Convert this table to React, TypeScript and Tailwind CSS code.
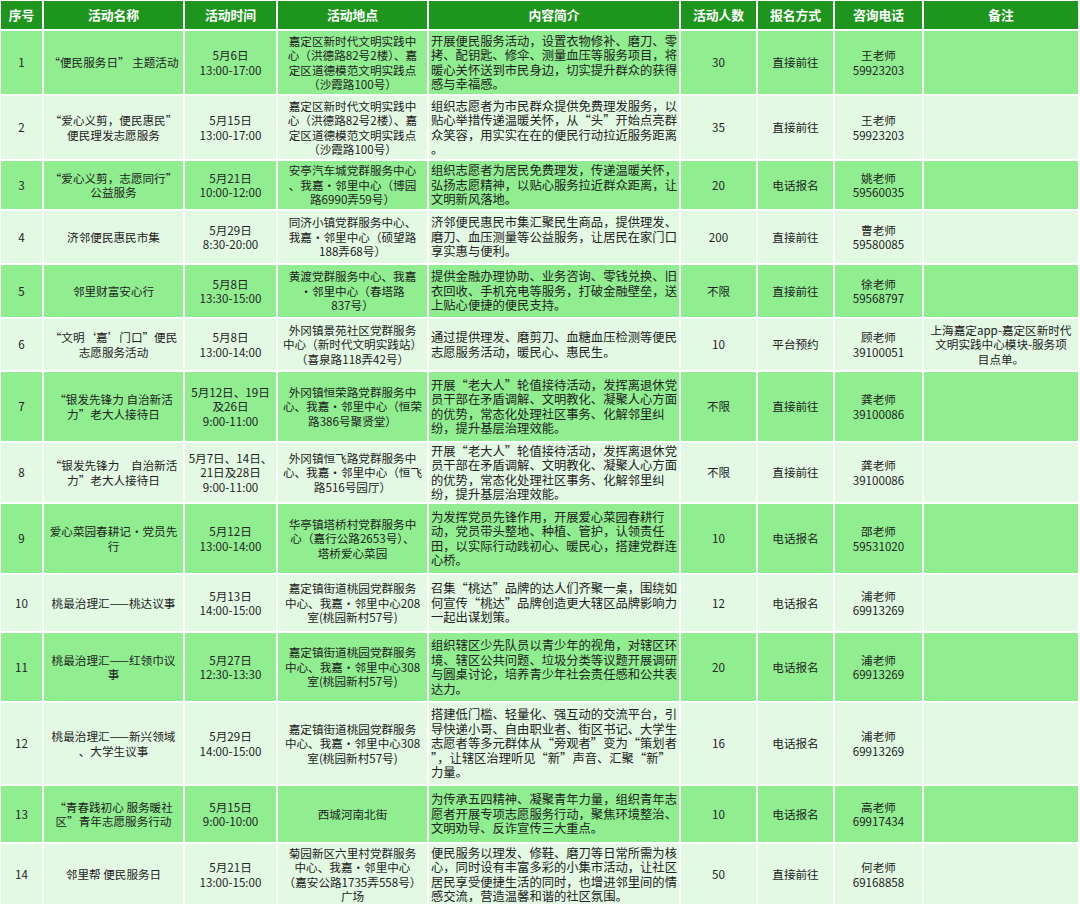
type Row = {
  no: string
  name: string[]
  time: string[]
  place: string[]
  desc: string[]
  count: string
  signup: string
  contact: string[]
  note: string[]
}

const placeJd = ["嘉定区新时代文明实践中", "心（洪德路82号2楼）、嘉", "定区道德模范文明实践点", "（沙霞路100号）"]

const laoDaRen = [
  "开展“老大人”轮值接待活动，发挥离退休党",
  "员干部在矛盾调解、文明教化、凝聚人心方面",
  "的优势，常态化处理社区事务、化解邻里纠",
  "纷，提升基层治理效能。",
]

const rows: Row[] = [
  {
    no: "1",
    name: ["“便民服务日” 主题活动"],
    time: ["5月6日", "13:00-17:00"],
    place: placeJd,
    desc: [
      "开展便民服务活动，设置衣物修补、磨刀、零",
      "拷、配钥匙、修伞、测量血压等服务项目，将",
      "暖心关怀送到市民身边，切实提升群众的获得",
      "感与幸福感。",
    ],
    count: "30",
    signup: "直接前往",
    contact: ["王老师", "59923203"],
    note: [],
  },
  {
    no: "2",
    name: ["“爱心义剪，便民惠民”", "便民理发志愿服务"],
    time: ["5月15日", "13:00-17:00"],
    place: placeJd,
    desc: [
      "组织志愿者为市民群众提供免费理发服务，以",
      "贴心举措传递温暖关怀，从“头”开始点亮群",
      "众笑容，用实实在在的便民行动拉近服务距离",
      "。",
    ],
    count: "35",
    signup: "直接前往",
    contact: ["王老师", "59923203"],
    note: [],
  },
  {
    no: "3",
    name: ["“爱心义剪，志愿同行”", "公益服务"],
    time: ["5月21日", "10:00-12:00"],
    place: ["安亭汽车城党群服务中心", "、我嘉·邻里中心（博园", "路6990弄59号）"],
    desc: [
      "组织志愿者为居民免费理发，传递温暖关怀，",
      "弘扬志愿精神，以贴心服务拉近群众距离，让",
      "文明新风落地。",
    ],
    count: "20",
    signup: "电话报名",
    contact: ["姚老师", "59560035"],
    note: [],
  },
  {
    no: "4",
    name: ["济邻便民惠民市集"],
    time: ["5月29日", "8:30-20:00"],
    place: ["同济小镇党群服务中心、", "我嘉·邻里中心（硕望路", "188弄68号）"],
    desc: [
      "济邻便民惠民市集汇聚民生商品，提供理发、",
      "磨刀、血压测量等公益服务，让居民在家门口",
      "享实惠与便利。",
    ],
    count: "200",
    signup: "直接前往",
    contact: ["曹老师", "59580085"],
    note: [],
  },
  {
    no: "5",
    name: ["邻里财富安心行"],
    time: ["5月8日", "13:30-15:00"],
    place: ["黄渡党群服务中心、我嘉", "·邻里中心（春塔路", "837号）"],
    desc: [
      "提供金融办理协助、业务咨询、零钱兑换、旧",
      "衣回收、手机充电等服务，打破金融壁垒，送",
      "上贴心便捷的便民支持。",
    ],
    count: "不限",
    signup: "直接前往",
    contact: ["徐老师", "59568797"],
    note: [],
  },
  {
    no: "6",
    name: ["“文明‘嘉’门口”便民", "志愿服务活动"],
    time: ["5月8日", "13:00-14:00"],
    place: ["外冈镇景苑社区党群服务", "中心（新时代文明实践站）", "（喜泉路118弄42号）"],
    desc: ["通过提供理发、磨剪刀、血糖血压检测等便民", "志愿服务活动，暖民心、惠民生。"],
    count: "10",
    signup: "平台预约",
    contact: ["顾老师", "39100051"],
    note: ["上海嘉定app-嘉定区新时代", "文明实践中心模块-服务项", "目点单。"],
  },
  {
    no: "7",
    name: ["“银发先锋力 自治新活", "力”老大人接待日"],
    time: ["5月12日、19日", "及26日", "9:00-11:00"],
    place: ["外冈镇恒荣路党群服务中", "心、我嘉•邻里中心（恒荣", "路386号聚贤堂）"],
    desc: laoDaRen,
    count: "不限",
    signup: "直接前往",
    contact: ["龚老师", "39100086"],
    note: [],
  },
  {
    no: "8",
    name: ["“银发先锋力　自治新活", "力”老大人接待日"],
    time: ["5月7日、14日、", "21日及28日", "9:00-11:00"],
    place: ["外冈镇恒飞路党群服务中", "心、我嘉•邻里中心（恒飞", "路516号园厅）"],
    desc: laoDaRen,
    count: "不限",
    signup: "直接前往",
    contact: ["龚老师", "39100086"],
    note: [],
  },
  {
    no: "9",
    name: ["爱心菜园春耕记·党员先", "行"],
    time: ["5月12日", "13:00-14:00"],
    place: ["华亭镇塔桥村党群服务中", "心（嘉行公路2653号）、", "塔桥爱心菜园"],
    desc: [
      "为发挥党员先锋作用，开展爱心菜园春耕行",
      "动，党员带头整地、种植、管护，认领责任",
      "田，以实际行动践初心、暖民心，搭建党群连",
      "心桥。",
    ],
    count: "10",
    signup: "电话报名",
    contact: ["邵老师", "59531020"],
    note: [],
  },
  {
    no: "10",
    name: ["桃最治理汇——桃达议事"],
    time: ["5月13日", "14:00-15:00"],
    place: ["嘉定镇街道桃园党群服务", "中心、我嘉·邻里中心208", "室(桃园新村57号)"],
    desc: [
      "召集“桃达”品牌的达人们齐聚一桌，围绕如",
      "何宣传“桃达”品牌创造更大辖区品牌影响力",
      "一起出谋划策。",
    ],
    count: "12",
    signup: "电话报名",
    contact: ["浦老师", "69913269"],
    note: [],
  },
  {
    no: "11",
    name: ["桃最治理汇——红领巾议", "事"],
    time: ["5月27日", "12:30-13:30"],
    place: ["嘉定镇街道桃园党群服务", "中心、我嘉·邻里中心308", "室(桃园新村57号)"],
    desc: [
      "组织辖区少先队员以青少年的视角，对辖区环",
      "境、辖区公共问题、垃圾分类等议题开展调研",
      "与圆桌讨论，培养青少年社会责任感和公共表",
      "达力。",
    ],
    count: "20",
    signup: "电话报名",
    contact: ["浦老师", "69913269"],
    note: [],
  },
  {
    no: "12",
    name: ["桃最治理汇——新兴领域", "、大学生议事"],
    time: ["5月29日", "14:00-15:00"],
    place: ["嘉定镇街道桃园党群服务", "中心、我嘉·邻里中心308", "室(桃园新村57号)"],
    desc: [
      "搭建低门槛、轻量化、强互动的交流平台，引",
      "导快递小哥、自由职业者、街区书记、大学生",
      "志愿者等多元群体从“旁观者”变为“策划者",
      "”，让辖区治理听见“新”声音、汇聚“新”",
      "力量。",
    ],
    count: "16",
    signup: "电话报名",
    contact: ["浦老师", "69913269"],
    note: [],
  },
  {
    no: "13",
    name: ["“青春践初心 服务暖社", "区”青年志愿服务行动"],
    time: ["5月15日", "9:00-10:00"],
    place: ["西城河南北街"],
    desc: [
      "为传承五四精神、凝聚青年力量，组织青年志",
      "愿者开展专项志愿服务行动，聚焦环境整治、",
      "文明劝导、反诈宣传三大重点。",
    ],
    count: "10",
    signup: "电话报名",
    contact: ["高老师", "69917434"],
    note: [],
  },
  {
    no: "14",
    name: ["邻里帮 便民服务日"],
    time: ["5月21日", "13:00-15:00"],
    place: ["菊园新区六里村党群服务", "中心、我嘉·邻里中心", "（嘉安公路1735弄558号）", "广场"],
    desc: [
      "便民服务以理发、修鞋、磨刀等日常所需为核",
      "心，同时设有丰富多彩的小集市活动，让社区",
      "居民享受便捷生活的同时，也增进邻里间的情",
      "感交流，营造温馨和谐的社区氛围。",
    ],
    count: "50",
    signup: "直接前往",
    contact: ["何老师", "69168858"],
    note: [],
  },
]

const headers = ["序号", "活动名称", "活动时间", "活动地点", "内容简介", "活动人数", "报名方式", "咨询电话", "备注"]

// desc column is a touch larger and left aligned, the rest centred
function Cell({ lines, bg, left }: { lines: string[]; bg: string; left?: boolean }) {
  return (
    <div
      className={`flex flex-col justify-center overflow-hidden leading-[14.5px] text-[#222] ${bg} ${
        left ? "items-start pl-[2px] text-left text-[12.3px]" : "items-center text-center text-[11.6px]"
      }`}
    >
      {lines.map((l, i) => (
        <div key={i} className="whitespace-nowrap">
          {l}
        </div>
      ))}
    </div>
  )
}

export default function App() {
  return (
    <div className="h-[904px] w-[1080px] overflow-hidden bg-white font-['Noto_Sans_CJK_SC','Noto_Sans',sans-serif]">
      <div className="grid grid-cols-[41px_139px_91px_149px_250px_75px_75px_87px_154px] grid-rows-[28px_63px_63px_48px_52px_52px_51px_69px_59px_69px_56px_68px_81px_56px_61px] gap-[2px] p-px">
        {headers.map((h) => (
          <div key={h} className="flex items-center justify-center bg-[#1e961e] text-[12.8px] font-bold text-white">
            {h}
          </div>
        ))}
        {rows.map((r, i) => {
          const bg = i % 2 === 0 ? "bg-[#90ee90]" : "bg-[#e3f9e3]"
          return [
            <Cell key={r.no + "a"} lines={[r.no]} bg={bg} />,
            <Cell key={r.no + "b"} lines={r.name} bg={bg} />,
            <Cell key={r.no + "c"} lines={r.time} bg={bg} />,
            <Cell key={r.no + "d"} lines={r.place} bg={bg} />,
            <Cell key={r.no + "e"} lines={r.desc} bg={bg} left />,
            <Cell key={r.no + "f"} lines={[r.count]} bg={bg} />,
            <Cell key={r.no + "g"} lines={[r.signup]} bg={bg} />,
            <Cell key={r.no + "h"} lines={r.contact} bg={bg} />,
            <Cell key={r.no + "i"} lines={r.note} bg={bg} />,
          ]
        })}
      </div>
    </div>
  )
}
